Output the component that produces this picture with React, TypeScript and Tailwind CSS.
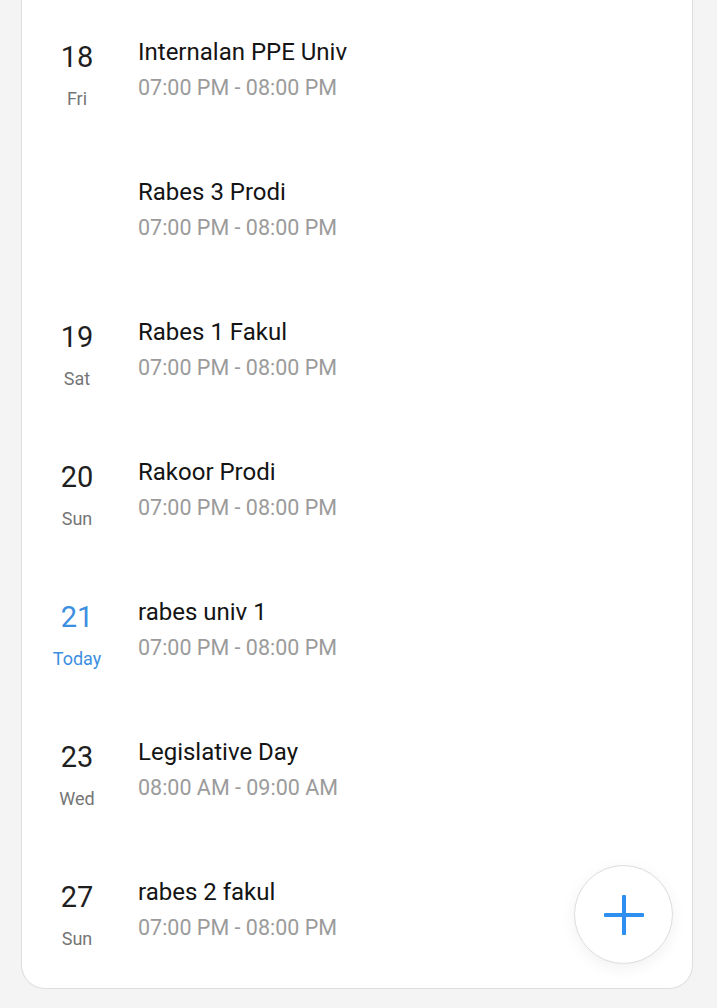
const events = [
  { day: "18", label: "Fri", title: "Internalan PPE Univ", time: "07:00 PM - 08:00 PM" },
  { day: "", label: "", title: "Rabes 3 Prodi", time: "07:00 PM - 08:00 PM" },
  { day: "19", label: "Sat", title: "Rabes 1 Fakul", time: "07:00 PM - 08:00 PM" },
  { day: "20", label: "Sun", title: "Rakoor Prodi", time: "07:00 PM - 08:00 PM" },
  { day: "21", label: "Today", title: "rabes univ 1", time: "07:00 PM - 08:00 PM", today: true },
  { day: "23", label: "Wed", title: "Legislative Day", time: "08:00 AM - 09:00 AM" },
  { day: "27", label: "Sun", title: "rabes 2 fakul", time: "07:00 PM - 08:00 PM" },
];

export default function App() {
  return (
    <main
      className="min-h-screen bg-[#f4f4f4] px-[21px] pb-5"
      style={{ fontFamily: "Roboto, 'Noto Sans', sans-serif" }}
    >
      <div className="relative bg-white border-x border-b border-[#dedede] rounded-b-[24px] w-[672px] pb-2">
        {events.map((e, i) => (
          <div key={i} className="flex h-[140px]">
            {/* date column */}
            <div className="w-[116px] pl-[20px] pt-[40px]">
              <div className="w-[70px] flex flex-col items-center">
                {e.day && (
                  <>
                    <span
                      className={`text-[29px] leading-[34px] ${e.today ? "text-[#3c8fe0]" : "text-[#1f1f1f]"}`}
                    >
                      {e.day}
                    </span>
                    <span
                      className={`mt-[13px] text-[18px] leading-[24px] ${e.today ? "text-[#3c8fe0]" : "text-[#757575]"}`}
                    >
                      {e.label}
                    </span>
                  </>
                )}
              </div>
            </div>
            {/* event */}
            <div className="pt-[37px]">
              <div className="text-[24px] leading-[30px] text-[#141414]">{e.title}</div>
              <div className="mt-[6px] text-[21.5px] leading-[30px] text-[#9b9b9b]">{e.time}</div>
            </div>
          </div>
        ))}

        <button className="absolute right-[19px] bottom-[24px] w-[99px] h-[99px] rounded-full bg-white border border-[#dddddd] shadow-[0_4px_16px_rgba(0,0,0,0.06)] flex items-center justify-center">
          <svg width="40" height="40" viewBox="0 0 40 40">
            <path d="M20 1.5v37M1.5 20h37" stroke="#2f8ff0" strokeWidth="4" strokeLinecap="round" />
          </svg>
        </button>
      </div>
    </main>
  );
}
